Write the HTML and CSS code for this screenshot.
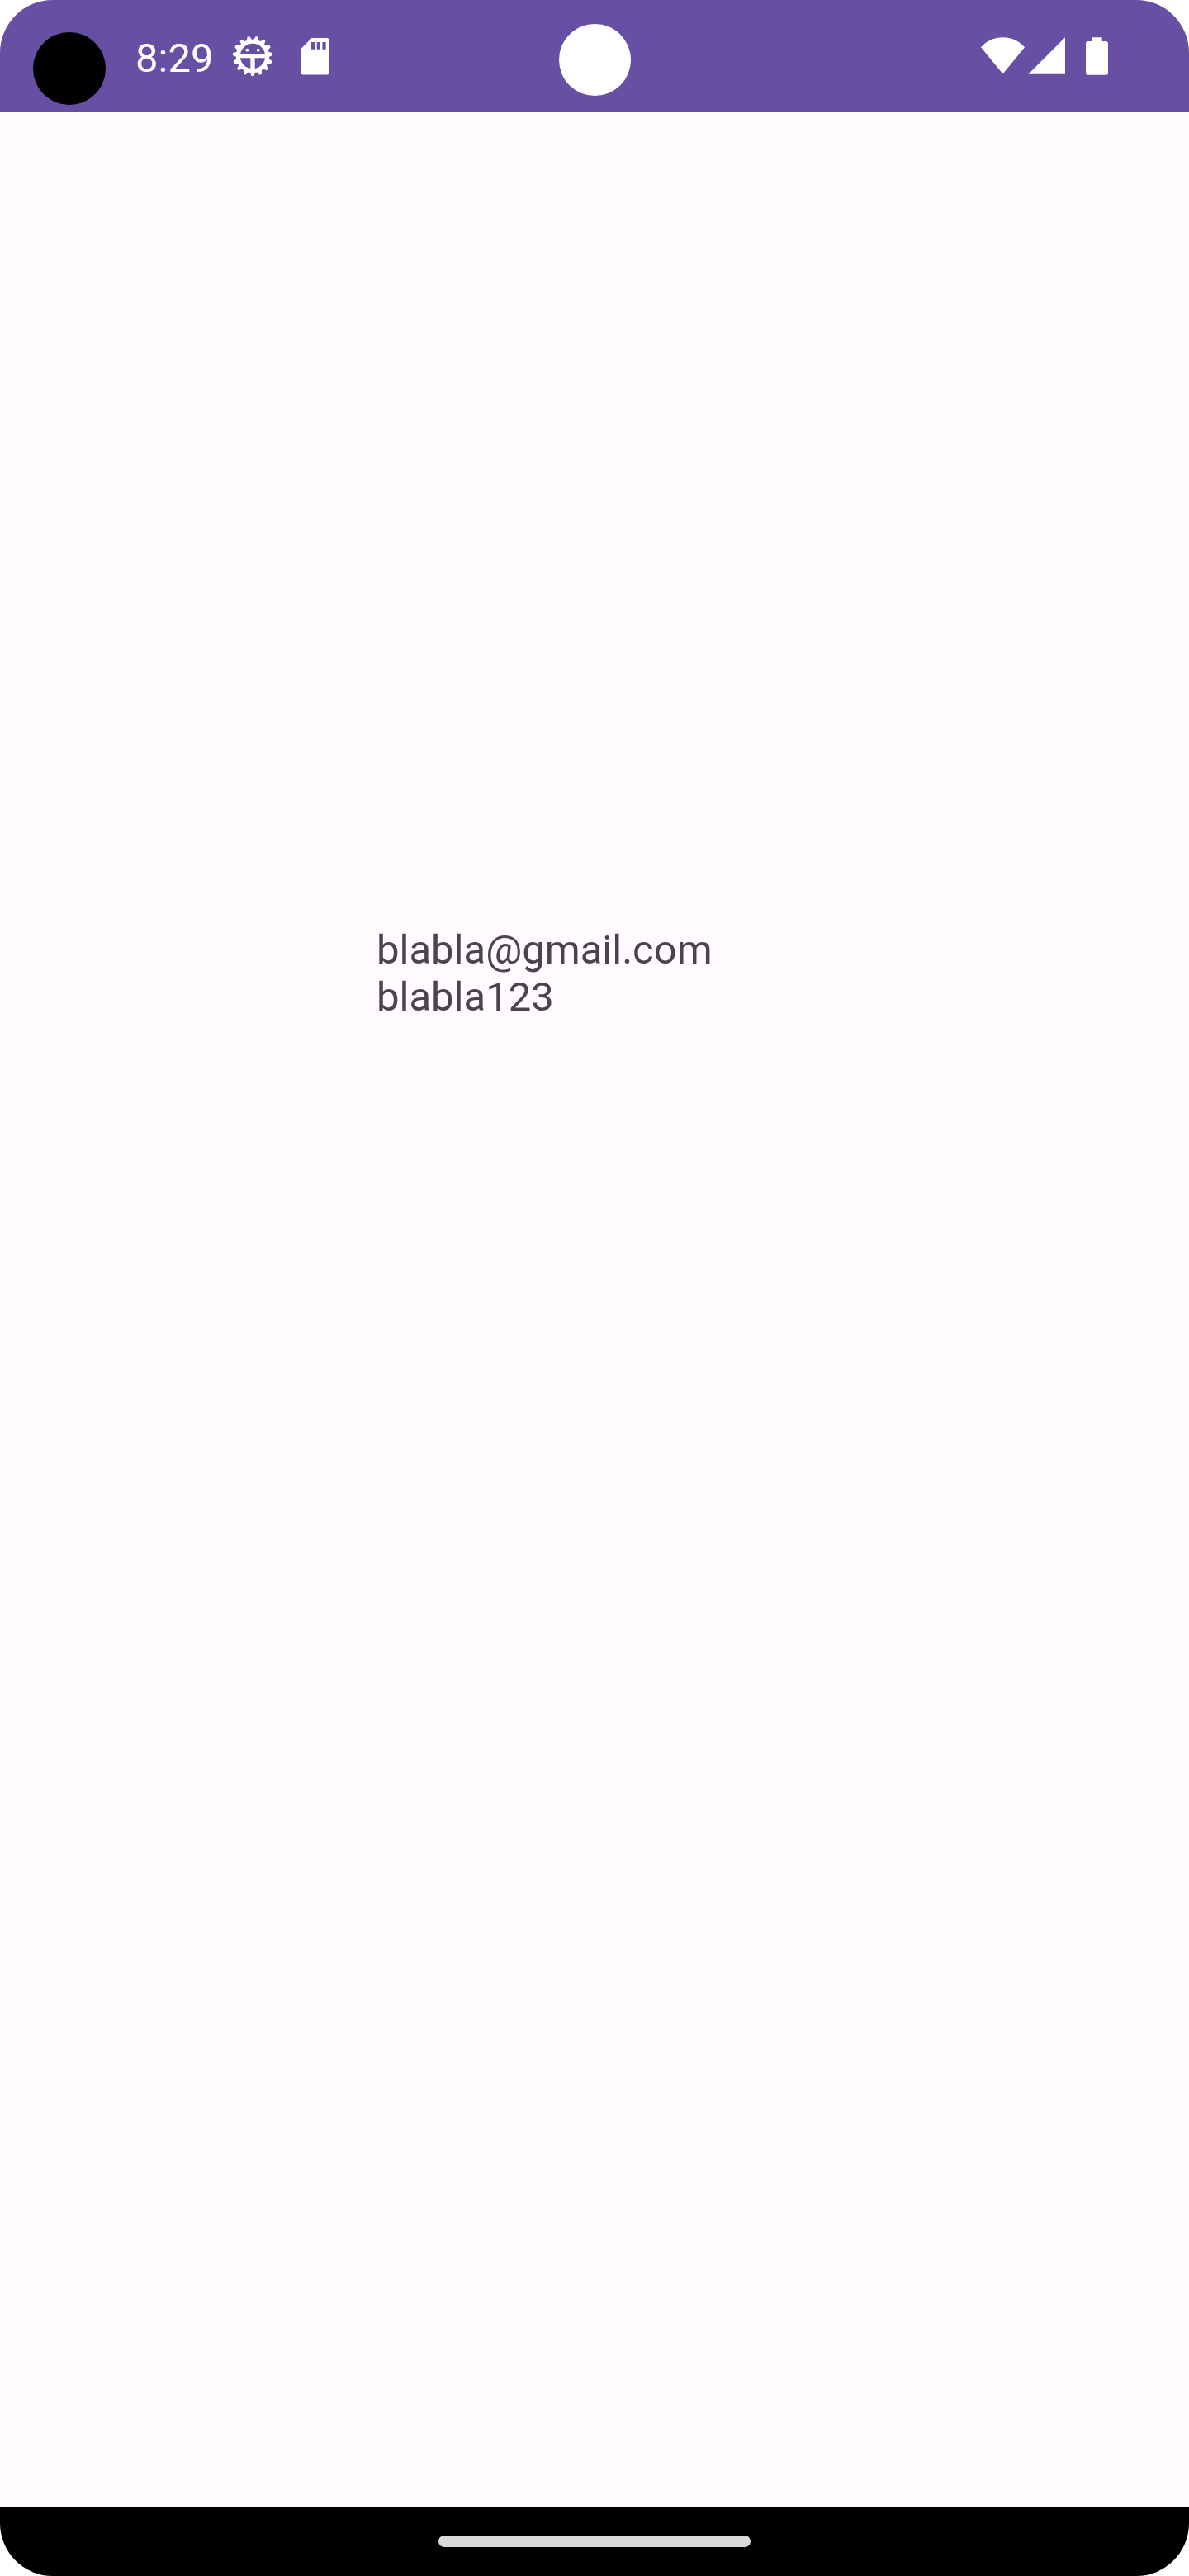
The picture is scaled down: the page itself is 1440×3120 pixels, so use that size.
FILE: index.html
```
<!DOCTYPE html>
<html lang="en">
<head>
  <meta charset="utf-8">
  <meta name="viewport" content="width=device-width, initial-scale=1">
  <title>Account</title>
  <link rel="stylesheet" href="styles.css">
</head>
<body>
  <div class="screen">
    <header class="status-bar">
      <span class="camera"></span>
      <span class="lens"></span>
      <div class="status-group">
        <time class="clock">8:29</time>
        <svg class="icon gear" viewBox="0 0 56 56" aria-hidden="true">
          <defs>
            <path id="tooth" d="M-2.500 18 L-.8 23.200 H.8 L2.500 18 Z"/>
          </defs>
          <g transform="translate(28 26)">
            <circle class="ring" r="17.700"/>
            <g class="teeth">
              <use href="#tooth"/>
              <use href="#tooth" transform="rotate(24)"/>
              <use href="#tooth" transform="rotate(48)"/>
              <use href="#tooth" transform="rotate(72)"/>
              <use href="#tooth" transform="rotate(96)"/>
              <use href="#tooth" transform="rotate(120)"/>
              <use href="#tooth" transform="rotate(144)"/>
              <use href="#tooth" transform="rotate(168)"/>
              <use href="#tooth" transform="rotate(192)"/>
              <use href="#tooth" transform="rotate(216)"/>
              <use href="#tooth" transform="rotate(240)"/>
              <use href="#tooth" transform="rotate(264)"/>
              <use href="#tooth" transform="rotate(288)"/>
              <use href="#tooth" transform="rotate(312)"/>
              <use href="#tooth" transform="rotate(336)"/>
            </g>
            <path d="M-17 -2 H17 V2.300 H2.700 V18 H-2.700 V2.300 H-17 Z"/>
            <circle cx="-6.700" cy="-7.300" r="1.900"/>
            <circle cx="6.700" cy="-7.300" r="1.900"/>
          </g>
        </svg>
        <svg class="icon card" viewBox="0 0 56 56" aria-hidden="true">
          <path fill-rule="evenodd" d="M23.500 4 H41.500 Q45 4 45 7.500 V45 Q45 48.500 41.500 48.500 H13.500 Q10 48.500 10 45 V17.500 Z M23 9 V17.700 H27 V9 Z M29.700 9 V17.700 H33.700 V9 Z M36.400 9 V17.700 H40.700 V9 Z"/>
        </svg>
      </div>
      <div class="status-group">
        <svg class="icon" viewBox="0 0 56 56" aria-hidden="true">
          <path d="M0 15.300 C7 7.500 16 3.300 26.500 3.300 S46 7.500 53 15.300 L26.500 47.500 Z"/>
        </svg>
        <svg class="icon" viewBox="0 0 56 56" aria-hidden="true">
          <path d="M46 3.300 V47.700 H1.500 Z"/>
        </svg>
        <svg class="icon" viewBox="0 0 56 56" aria-hidden="true">
          <path d="M23 3.300 H34.700 V8 H39.500 Q42 8 42 10.500 V46.300 Q42 48.800 39.500 48.800 H17.500 Q15 48.800 15 46.300 V10.500 Q15 8 17.500 8 H23 Z"/>
        </svg>
      </div>
    </header>
    <main class="content">
      <div class="details">
        <p class="line">blabla@gmail.com</p>
        <p class="line">blabla123</p>
      </div>
    </main>
    <footer class="nav-bar">
      <span class="handle"></span>
    </footer>
  </div>
</body>
</html>
```
FILE: styles.css
```
* {
  box-sizing: border-box;
}

body {
  margin: 0;
  background: #fff;
  color: #49454f;
  font: 400 49px/57px Roboto, sans-serif;
}

.screen {
  display: flex;
  flex-direction: column;
  min-height: 100vh;
  overflow: hidden;
  border-radius: 64px;
  background: #fffbfe;
}

.status-bar {
  position: relative;
  display: flex;
  align-items: center;
  justify-content: space-between;
  height: 136px;
  padding: 4px 84px 0 164px;
  background: #6750a4;
  color: #fff;
}

.status-group {
  display: flex;
  align-items: center;
}

.icon {
  width: 56px;
  height: 56px;
  fill: #fff;
}

.gear,
.card {
  margin-left: 20px;
}

.ring {
  fill: none;
  stroke: #fff;
  stroke-width: 5;
}

.teeth {
  stroke: #fff;
  stroke-width: 2;
  stroke-linejoin: round;
}

/* Display cutouts sit over the status bar */
.camera,
.lens {
  position: absolute;
  border-radius: 50%;
}

.camera {
  top: 39px;
  left: 40px;
  width: 88px;
  height: 88px;
  background: #000;
}

.lens {
  top: 29px;
  left: calc(50% - 43px);
  width: 87px;
  height: 87px;
  background: #fff;
}

.content {
  flex: 1;
  display: grid;
  grid-template-columns: 456fr 984fr;
  grid-template-rows: 986fr 1914fr;
}

.details {
  grid-area: 2 / 2;
}

.line {
  margin: 0;
}

.nav-bar {
  display: flex;
  align-items: center;
  justify-content: center;
  height: 84px;
  background: #000;
}

.handle {
  width: 378px;
  height: 14px;
  border-radius: 7px;
  background: #dadada;
}
```
